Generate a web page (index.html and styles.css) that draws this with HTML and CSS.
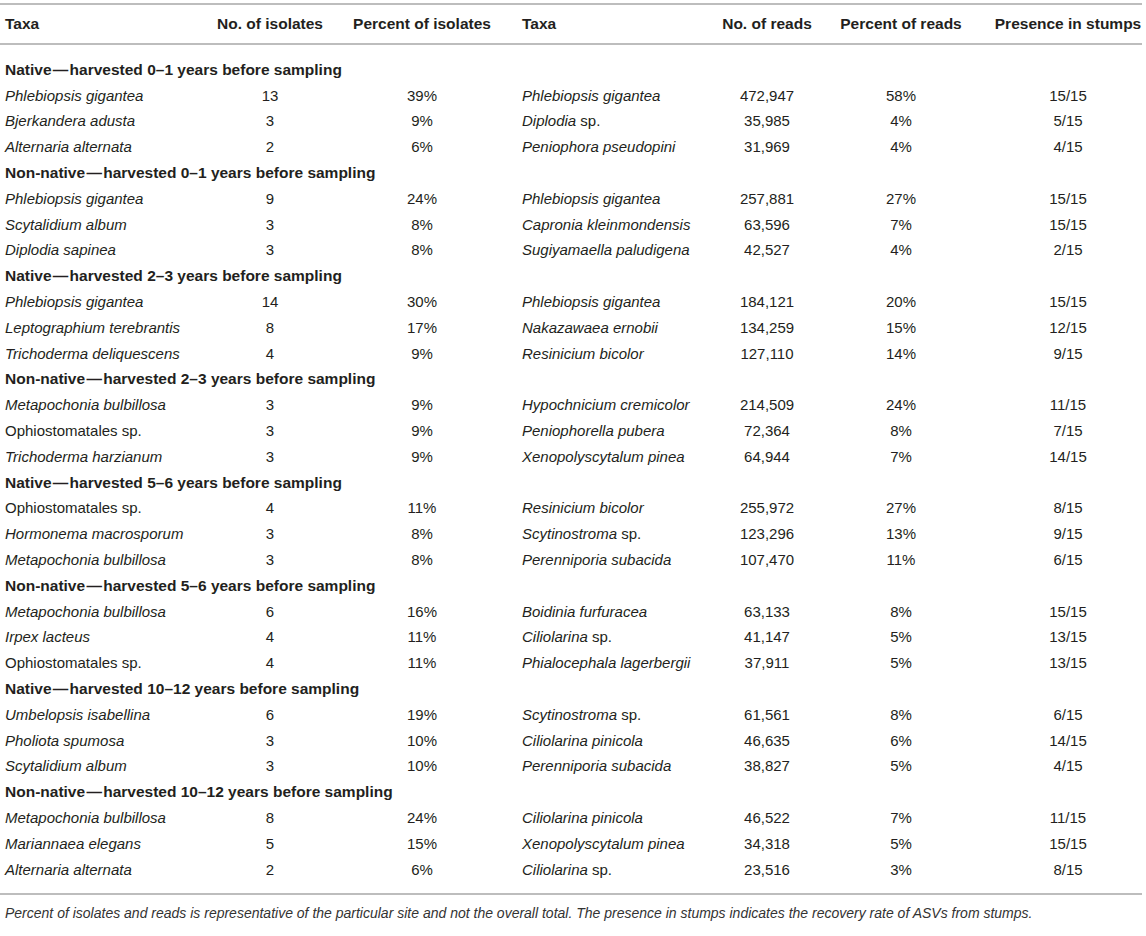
FILE: index.html
```html
<!DOCTYPE html>
<html lang="en">
<head>
<meta charset="utf-8">
<title>Fungal taxa in stumps</title>
<link rel="stylesheet" href="styles.css">
</head>
<body>
<div class="wrap">
<table class="tbl">
<colgroup>
<col class="c1"><col class="c2"><col class="c3"><col class="c4"><col class="c5"><col class="c6"><col class="c7">
</colgroup>
<thead>
<tr>
<th class="lft">Taxa</th><th>No. of isolates</th><th>Percent of isolates</th><th class="lft tx2">Taxa</th><th>No. of reads</th><th>Percent of reads</th><th class="pr">Presence in stumps</th>
</tr>
</thead>
<tbody>
<tr class="grp first"><td colspan="7">Native&#8202;—&#8202;harvested 0–1 years before sampling</td></tr>
<tr><td class="lft"><i>Phlebiopsis gigantea</i></td><td>13</td><td>39%</td><td class="lft tx2"><i>Phlebiopsis gigantea</i></td><td>472,947</td><td>58%</td><td class="pr">15/15</td></tr>
<tr><td class="lft"><i>Bjerkandera adusta</i></td><td>3</td><td>9%</td><td class="lft tx2"><i>Diplodia</i> sp.</td><td>35,985</td><td>4%</td><td class="pr">5/15</td></tr>
<tr><td class="lft"><i>Alternaria alternata</i></td><td>2</td><td>6%</td><td class="lft tx2"><i>Peniophora pseudopini</i></td><td>31,969</td><td>4%</td><td class="pr">4/15</td></tr>

<tr class="grp"><td colspan="7">Non-native&#8202;—&#8202;harvested 0–1 years before sampling</td></tr>
<tr><td class="lft"><i>Phlebiopsis gigantea</i></td><td>9</td><td>24%</td><td class="lft tx2"><i>Phlebiopsis gigantea</i></td><td>257,881</td><td>27%</td><td class="pr">15/15</td></tr>
<tr><td class="lft"><i>Scytalidium album</i></td><td>3</td><td>8%</td><td class="lft tx2"><i>Capronia kleinmondensis</i></td><td>63,596</td><td>7%</td><td class="pr">15/15</td></tr>
<tr><td class="lft"><i>Diplodia sapinea</i></td><td>3</td><td>8%</td><td class="lft tx2"><i>Sugiyamaella paludigena</i></td><td>42,527</td><td>4%</td><td class="pr">2/15</td></tr>

<tr class="grp"><td colspan="7">Native&#8202;—&#8202;harvested 2–3 years before sampling</td></tr>
<tr><td class="lft"><i>Phlebiopsis gigantea</i></td><td>14</td><td>30%</td><td class="lft tx2"><i>Phlebiopsis gigantea</i></td><td>184,121</td><td>20%</td><td class="pr">15/15</td></tr>
<tr><td class="lft"><i>Leptographium terebrantis</i></td><td>8</td><td>17%</td><td class="lft tx2"><i>Nakazawaea ernobii</i></td><td>134,259</td><td>15%</td><td class="pr">12/15</td></tr>
<tr><td class="lft"><i>Trichoderma deliquescens</i></td><td>4</td><td>9%</td><td class="lft tx2"><i>Resinicium bicolor</i></td><td>127,110</td><td>14%</td><td class="pr">9/15</td></tr>

<tr class="grp"><td colspan="7">Non-native&#8202;—&#8202;harvested 2–3 years before sampling</td></tr>
<tr><td class="lft"><i>Metapochonia bulbillosa</i></td><td>3</td><td>9%</td><td class="lft tx2"><i>Hypochnicium cremicolor</i></td><td>214,509</td><td>24%</td><td class="pr">11/15</td></tr>
<tr><td class="lft">Ophiostomatales sp.</td><td>3</td><td>9%</td><td class="lft tx2"><i>Peniophorella pubera</i></td><td>72,364</td><td>8%</td><td class="pr">7/15</td></tr>
<tr><td class="lft"><i>Trichoderma harzianum</i></td><td>3</td><td>9%</td><td class="lft tx2"><i>Xenopolyscytalum pinea</i></td><td>64,944</td><td>7%</td><td class="pr">14/15</td></tr>

<tr class="grp"><td colspan="7">Native&#8202;—&#8202;harvested 5–6 years before sampling</td></tr>
<tr><td class="lft">Ophiostomatales sp.</td><td>4</td><td>11%</td><td class="lft tx2"><i>Resinicium bicolor</i></td><td>255,972</td><td>27%</td><td class="pr">8/15</td></tr>
<tr><td class="lft"><i>Hormonema macrosporum</i></td><td>3</td><td>8%</td><td class="lft tx2"><i>Scytinostroma</i> sp.</td><td>123,296</td><td>13%</td><td class="pr">9/15</td></tr>
<tr><td class="lft"><i>Metapochonia bulbillosa</i></td><td>3</td><td>8%</td><td class="lft tx2"><i>Perenniporia subacida</i></td><td>107,470</td><td>11%</td><td class="pr">6/15</td></tr>

<tr class="grp"><td colspan="7">Non-native&#8202;—&#8202;harvested 5–6 years before sampling</td></tr>
<tr><td class="lft"><i>Metapochonia bulbillosa</i></td><td>6</td><td>16%</td><td class="lft tx2"><i>Boidinia furfuracea</i></td><td>63,133</td><td>8%</td><td class="pr">15/15</td></tr>
<tr><td class="lft"><i>Irpex lacteus</i></td><td>4</td><td>11%</td><td class="lft tx2"><i>Ciliolarina</i> sp.</td><td>41,147</td><td>5%</td><td class="pr">13/15</td></tr>
<tr><td class="lft">Ophiostomatales sp.</td><td>4</td><td>11%</td><td class="lft tx2"><i>Phialocephala lagerbergii</i></td><td>37,911</td><td>5%</td><td class="pr">13/15</td></tr>

<tr class="grp"><td colspan="7">Native&#8202;—&#8202;harvested 10–12 years before sampling</td></tr>
<tr><td class="lft"><i>Umbelopsis isabellina</i></td><td>6</td><td>19%</td><td class="lft tx2"><i>Scytinostroma</i> sp.</td><td>61,561</td><td>8%</td><td class="pr">6/15</td></tr>
<tr><td class="lft"><i>Pholiota spumosa</i></td><td>3</td><td>10%</td><td class="lft tx2"><i>Ciliolarina pinicola</i></td><td>46,635</td><td>6%</td><td class="pr">14/15</td></tr>
<tr><td class="lft"><i>Scytalidium album</i></td><td>3</td><td>10%</td><td class="lft tx2"><i>Perenniporia subacida</i></td><td>38,827</td><td>5%</td><td class="pr">4/15</td></tr>

<tr class="grp"><td colspan="7">Non-native&#8202;—&#8202;harvested 10–12 years before sampling</td></tr>
<tr><td class="lft"><i>Metapochonia bulbillosa</i></td><td>8</td><td>24%</td><td class="lft tx2"><i>Ciliolarina pinicola</i></td><td>46,522</td><td>7%</td><td class="pr">11/15</td></tr>
<tr><td class="lft"><i>Mariannaea elegans</i></td><td>5</td><td>15%</td><td class="lft tx2"><i>Xenopolyscytalum pinea</i></td><td>34,318</td><td>5%</td><td class="pr">15/15</td></tr>
<tr class="last"><td class="lft"><i>Alternaria alternata</i></td><td>2</td><td>6%</td><td class="lft tx2"><i>Ciliolarina</i> sp.</td><td>23,516</td><td>3%</td><td class="pr">8/15</td></tr>
</tbody>
</table>
<p class="note">Percent of isolates and reads is representative of the particular site and not the overall total. The presence in stumps indicates the recovery rate of ASVs from stumps.</p>
</div>
</body>
</html>
```

FILE: styles.css
```css
html, body {
  margin: 0;
  padding: 0;
  background: #ffffff;
}

body {
  font-family: "Liberation Sans", Arial, Helvetica, sans-serif;
  color: #231f20;
}

.wrap {
  width: 1142px;
  padding-top: 3px;
}

.tbl {
  width: 1142px;
  border-collapse: collapse;
  table-layout: fixed;
  border-top: 2px solid #bdbdbd;
  border-bottom: 2px solid #bdbdbd;
}

.c1 { width: 200px; }
.c2 { width: 140px; }
.c3 { width: 164px; }
.c4 { width: 196px; }
.c5 { width: 134px; }
.c6 { width: 134px; }
.c7 { width: 174px; }

.tbl th,
.tbl td {
  padding: 0;
  text-align: center;
  white-space: nowrap;
}

.tbl th {
  font-size: 15.5px;
  font-weight: bold;
  height: 38px;
  vertical-align: middle;
  border-bottom: 2px solid #bdbdbd;
}

.tbl td {
  font-size: 15px;
  height: 25.8px;
  line-height: 18px;
  vertical-align: middle;
}

.tbl .lft {
  text-align: left;
  padding-left: 5px;
}

.tbl .tx2 {
  padding-left: 18px;
}

.tbl .pr {
  padding-left: 26px;
}

.tbl i {
  font-style: italic;
}

.grp td {
  font-size: 15.5px;
  font-weight: bold;
  text-align: left;
  padding-left: 5px;
}

.grp.first td {
  padding-top: 12px;
}

.last td {
  padding-bottom: 10px;
}

.note {
  margin: 9px 0 0 0;
  padding-left: 5px;
  font-size: 14px;
  font-style: italic;
  line-height: 18px;
  color: #333333;
}
```
